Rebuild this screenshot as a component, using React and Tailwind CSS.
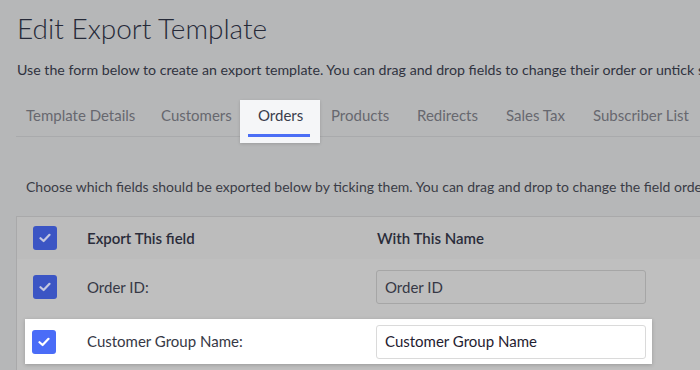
import React from 'react';

const Checkbox = ({ active }) => (
  <div
    className={
      active
        ? 'flex h-6 w-6 items-center justify-center rounded-[3px] bg-[#4a6cf7]'
        : 'flex h-6 w-6 items-center justify-center rounded-[3px] bg-[#3b55c4]'
    }
  >
    <svg width="12" height="10" viewBox="0 0 12 10" fill="none">
      <path
        d="M1.5 5.2 L4.6 8 L10.5 1.8"
        stroke={active ? '#ffffff' : '#c4c8e0'}
        strokeWidth="2.2"
        strokeLinecap="round"
        strokeLinejoin="round"
      />
    </svg>
  </div>
);

const tabs = [
  { label: 'Template Details', cls: 'w-[135px]' },
  { label: 'Customers', cls: 'w-[79px]' },
  { label: 'Orders', active: true },
  { label: 'Products', cls: 'ml-[11px] w-[86px]' },
  { label: 'Redirects', cls: 'w-[89px]' },
  { label: 'Sales Tax', cls: 'w-[87px]' },
  { label: 'Subscriber List', cls: 'w-[120px]' },
];

export default function App() {
  return (
    <div className="h-[370px] w-[700px] overflow-hidden whitespace-nowrap bg-[#b6b7b8] pl-4 font-['Lato',sans-serif]">
      <h1 className="pl-px pt-[10px] text-[28px] font-light leading-[36px] text-[#262a38]">
        Edit Export Template
      </h1>
      <p className="mt-[14px] pl-px text-[14.2px] leading-[20px] text-[#30333f]">
        Use the form below to create an export template. You can drag and drop fields to change their order or untick some
      </p>

      <div className="mt-[20px] flex h-[37px] w-[720px] border-b border-[#a9aaac] pl-[10px]">
        {tabs.map((tab) =>
          tab.active ? (
            <div
              key={tab.label}
              className="relative z-10 mb-[-7px] flex h-[43px] w-[80px] shrink-0 flex-col bg-[#f5f6f8] px-2 pt-[5px] shadow-[0_1px_3px_rgba(0,0,0,0.15)]"
            >
              <span className="pl-[10px] text-[15px] leading-[20px] text-[#3a3d4c]">{tab.label}</span>
              <div className="mt-[9px] h-[3px] w-[62px] bg-[#4b6ef5]" />
            </div>
          ) : (
            <div
              key={tab.label}
              className={`${tab.cls} shrink-0 pt-[5px] text-[15px] leading-[20px] text-[#67686f]`}
            >
              {tab.label}
            </div>
          )
        )}
      </div>

      <p className="mt-[40px] pl-[10px] text-[14px] leading-[20px] text-[#3a3c46]">
        Choose which fields should be exported below by ticking them. You can drag and drop to change the field order.
      </p>

      <div className="mt-[19px] w-[720px] border-l border-t border-[#a9a9aa] bg-[#bcbcbc]">
        <div className="flex h-[42px] items-center pl-4">
          <Checkbox />
          <span className="ml-[30px] w-[290px] text-[15px] font-semibold text-[#2a2c3a]">Export This field</span>
          <span className="text-[15px] font-semibold text-[#2a2c3a]">With This Name</span>
        </div>
        <div className="bg-[#bfbfbf] pb-[8px]">
          <div className="flex h-[56px] items-center pl-4">
            <Checkbox />
            <span className="ml-[30px] w-[289px] text-[15px] text-[#363845]">Order ID:</span>
            <div className="flex h-[34px] w-[270px] items-center rounded-[3px] border border-[#a6a6a6] bg-[#bebebe] pl-2 text-[15px] text-[#363845]">
              Order ID
            </div>
          </div>
          <div className="ml-2 mt-[4px] flex h-[45px] w-[627px] items-center bg-white pl-[7px] shadow-[0_1px_4px_rgba(0,0,0,0.2)]">
            <Checkbox active />
            <span className="ml-[31px] w-[289px] text-[15px] text-[#363845]">Customer Group Name:</span>
            <div className="flex h-[34px] w-[270px] items-center rounded-[3px] border border-[#dadada] bg-white pl-2 text-[15px] text-[#1f2130]">
              Customer Group Name
            </div>
          </div>
        </div>
      </div>
    </div>
  );
}
